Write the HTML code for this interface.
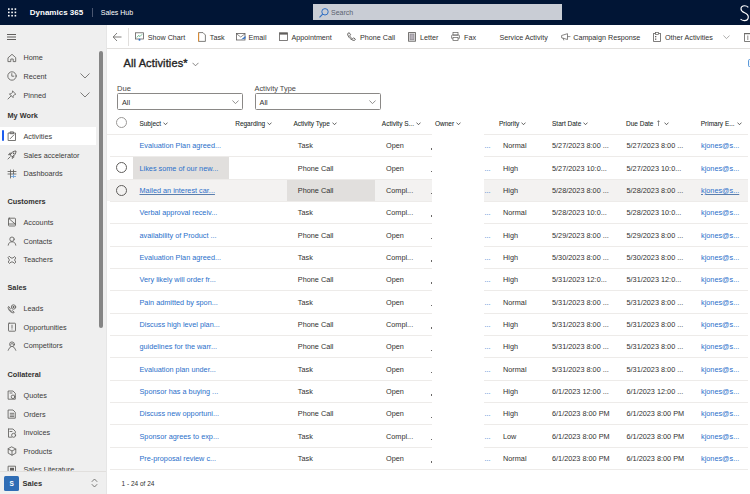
<!DOCTYPE html><html><head><meta charset="utf-8"><style>
*{margin:0;padding:0;box-sizing:border-box}
html,body{width:750px;height:494px;overflow:hidden;background:#fff;font-family:"Liberation Sans",sans-serif;color:#323130}
.a{position:absolute;white-space:nowrap}
#hdr{position:absolute;left:0;top:0;width:750px;height:25px;background:#011535}
#side{position:absolute;left:0;top:25px;width:105.5px;height:469px;background:#efefef}
.nv{position:absolute;left:23.5px;font-size:7.25px;color:#3b3a39;line-height:10px}
.grp{position:absolute;left:7.5px;font-size:7.3px;font-weight:bold;color:#323130;line-height:10px}
.ic{position:absolute;left:7px;width:10px;height:10px}
.tb{position:absolute;top:32.6px;font-size:7.2px;color:#323130;line-height:10px}
.gh{position:absolute;top:118.8px;font-size:6.5px;color:#201f1e;line-height:10px;-webkit-text-stroke:0.06px #201f1e}
.gc{position:absolute;font-size:7.3px;line-height:10px;color:#323130}
.lk{color:#2a6fca}
.rl{position:absolute;left:110px;width:637.7px;height:1px;background:#edebe9}
</style></head><body>
<div id="hdr">
<svg class="a" style="left:0;top:0" width="30" height="25"><rect x="8.0" y="8.3" width="1.6" height="1.6" fill="#fff"/><rect x="11.3" y="8.3" width="1.6" height="1.6" fill="#fff"/><rect x="14.6" y="8.3" width="1.6" height="1.6" fill="#fff"/><rect x="8.0" y="11.6" width="1.6" height="1.6" fill="#fff"/><rect x="11.3" y="11.6" width="1.6" height="1.6" fill="#fff"/><rect x="14.6" y="11.6" width="1.6" height="1.6" fill="#fff"/><rect x="8.0" y="14.9" width="1.6" height="1.6" fill="#fff"/><rect x="11.3" y="14.9" width="1.6" height="1.6" fill="#fff"/><rect x="14.6" y="14.9" width="1.6" height="1.6" fill="#fff"/></svg>
<div class="a" style="left:29.8px;top:8px;font-size:8px;font-weight:bold;color:#fff;line-height:10px">Dynamics 365</div>
<div class="a" style="left:92px;top:8px;width:1px;height:9px;background:#4a5670"></div>
<div class="a" style="left:100.8px;top:7.8px;font-size:7px;color:#fff;line-height:10px">Sales Hub</div>
<div class="a" style="left:313px;top:4.2px;width:248.5px;height:16.2px;background:#c9cdd5"></div>
<svg class="a" style="left:318px;top:7px" width="12" height="12" viewBox="0 0 12 12"><circle cx="7" cy="4.8" r="3.2" fill="none" stroke="#2f6fc4" stroke-width="1"/><line x1="4.7" y1="7.1" x2="1.5" y2="10.3" stroke="#2f6fc4" stroke-width="1.1"/></svg>
<div class="a" style="left:331px;top:8px;font-size:7px;color:#5a6270;line-height:10px">Search</div>
<svg class="a" style="left:739.5px;top:4.5px" width="10" height="17" viewBox="0 0 10 17"><path d="M8.3,2.4 C7.4,1.3 6.1,0.7 4.6,0.7 C2.4,0.7 1,2 1,3.9 C1,5.9 2.6,6.8 4.6,7.7 C6.7,8.6 8.3,9.7 8.3,12 C8.3,14.1 6.6,15.6 4.3,15.6 C2.7,15.6 1.3,15 0.5,14" fill="none" stroke="#fff" stroke-width="1.15"/></svg>
</div>
<div id="side"></div>
<div class="a" style="left:7px;top:34px;width:9px;height:1px;background:#605e5c;box-shadow:0 2.5px 0 #605e5c,0 5px 0 #605e5c"></div>
<div class="a" style="left:0;top:126.7px;width:96.2px;height:18.4px;background:#fff"></div>
<div class="a" style="left:1.8px;top:130.3px;width:2.4px;height:11px;background:#1a5cf0;border-radius:1px"></div>
<div class="nv" style="top:53.4px">Home</div><svg class="a" style="left:7px;top:52.9px" width="10" height="10" viewBox="0 0 10 10"><path d="M1.3,4.6 L5,1.3 L8.7,4.6 V8.6 H6.2 V6 H3.8 V8.6 H1.3 Z" stroke="#605e5c" stroke-width="0.85" fill="none" stroke-linejoin="round" stroke-linecap="round"/></svg>
<div class="nv" style="top:71.8px">Recent</div><svg class="a" style="left:7px;top:71.3px" width="10" height="10" viewBox="0 0 10 10"><circle cx="5" cy="5" r="4.2" stroke="#605e5c" stroke-width="0.85" fill="none" stroke-linejoin="round" stroke-linecap="round"/><polyline points="4.8,2.6 4.8,5.2 6.8,5.2" stroke="#605e5c" stroke-width="0.85" fill="none" stroke-linejoin="round" stroke-linecap="round"/></svg><svg class="a" style="left:80px;top:73.2px" width="10" height="6" viewBox="0 0 10 6"><polyline points="0.5,0.5 5,5 9.5,0.5" fill="none" stroke="#605e5c" stroke-width="0.8"/></svg>
<div class="nv" style="top:90.5px">Pinned</div><svg class="a" style="left:7px;top:90.0px" width="10" height="10" viewBox="0 0 10 10"><path d="M5.8,1.2 L8.8,4.2 L7.6,4.6 L6.1,6.1 L6.1,7.6 L2.4,3.9 L3.9,3.9 L5.4,2.4 Z" stroke="#605e5c" stroke-width="0.85" fill="none" stroke-linejoin="round" stroke-linecap="round"/><line x1="4" y1="6" x2="1" y2="9" stroke="#605e5c" stroke-width="0.85" fill="none" stroke-linejoin="round" stroke-linecap="round"/></svg><svg class="a" style="left:80px;top:91.9px" width="10" height="6" viewBox="0 0 10 6"><polyline points="0.5,0.5 5,5 9.5,0.5" fill="none" stroke="#605e5c" stroke-width="0.8"/></svg>
<div class="grp" style="top:110.8px">My Work</div>
<div class="nv" style="top:131.9px">Activities</div><svg class="a" style="left:7px;top:131.4px" width="10" height="10" viewBox="0 0 10 10"><rect x="1.5" y="2" width="7" height="7.5" stroke="#605e5c" stroke-width="0.85" fill="none" stroke-linejoin="round" stroke-linecap="round"/><rect x="3.5" y="0.9" width="3" height="1.8" stroke="#605e5c" stroke-width="0.85" fill="none" stroke-linejoin="round" stroke-linecap="round"/><line x1="3.3" y1="7.6" x2="7" y2="3.8" stroke="#605e5c" stroke-width="0.85" fill="none" stroke-linejoin="round" stroke-linecap="round"/></svg>
<div class="nv" style="top:150.6px">Sales accelerator</div><svg class="a" style="left:7px;top:150.1px" width="10" height="10" viewBox="0 0 10 10"><path d="M9,1 C6.5,1 4.5,2.5 3.2,4.8 L5.2,6.8 C7.5,5.5 9,3.5 9,1 Z" stroke="#605e5c" stroke-width="1" fill="none"/><circle cx="6.6" cy="3.4" r="0.8" fill="#605e5c"/><path d="M3.5,4.5 L1.5,4.8 L2.7,3.2 L4.5,3.2 M5.5,6.5 L5.2,8.5 L6.8,7.3 L6.8,5.5" stroke="#605e5c" stroke-width="0.85" fill="none" stroke-linejoin="round" stroke-linecap="round"/><line x1="3.2" y1="6.8" x2="1" y2="9" stroke="#605e5c" stroke-width="0.85" fill="none" stroke-linejoin="round" stroke-linecap="round"/></svg>
<div class="nv" style="top:169.0px">Dashboards</div><svg class="a" style="left:7px;top:168.5px" width="10" height="10" viewBox="0 0 10 10"><line x1="3.5" y1="1" x2="3.5" y2="9" stroke="#605e5c" stroke-width="0.85" fill="none" stroke-linejoin="round" stroke-linecap="round"/><line x1="6.5" y1="1" x2="6.5" y2="5" stroke="#605e5c" stroke-width="0.85" fill="none" stroke-linejoin="round" stroke-linecap="round"/><line x1="1" y1="2.5" x2="9" y2="2.5" stroke="#605e5c" stroke-width="0.85" fill="none" stroke-linejoin="round" stroke-linecap="round"/><line x1="1" y1="5" x2="9" y2="5" stroke="#605e5c" stroke-width="0.85" fill="none" stroke-linejoin="round" stroke-linecap="round"/><line x1="4" y1="7.5" x2="9" y2="7.5" stroke="#6a9fd8" stroke-width="0.85"/><line x1="6.5" y1="5" x2="6.5" y2="9" stroke="#6a9fd8" stroke-width="0.85"/></svg>
<div class="grp" style="top:197.0px">Customers</div>
<div class="nv" style="top:217.7px">Accounts</div><svg class="a" style="left:7px;top:217.2px" width="10" height="10" viewBox="0 0 10 10"><rect x="1.5" y="1.2" width="7" height="7.8" rx="0.8" stroke="#605e5c" stroke-width="0.85" fill="none" stroke-linejoin="round" stroke-linecap="round"/><line x1="1.8" y1="1.5" x2="8.2" y2="7" stroke="#605e5c" stroke-width="0.85" fill="none" stroke-linejoin="round" stroke-linecap="round"/><line x1="1.5" y1="7" x2="8.5" y2="7" stroke="#605e5c" stroke-width="0.85" fill="none" stroke-linejoin="round" stroke-linecap="round"/></svg>
<div class="nv" style="top:236.6px">Contacts</div><svg class="a" style="left:7px;top:236.1px" width="10" height="10" viewBox="0 0 10 10"><circle cx="5" cy="3.2" r="2.2" stroke="#605e5c" stroke-width="0.85" fill="none" stroke-linejoin="round" stroke-linecap="round"/><path d="M1.2,9.2 C1.5,6.8 3,5.8 5,5.8 C7,5.8 8.5,6.8 8.8,9.2" stroke="#605e5c" stroke-width="0.85" fill="none" stroke-linejoin="round" stroke-linecap="round"/></svg>
<div class="nv" style="top:255.2px">Teachers</div><svg class="a" style="left:7px;top:254.7px" width="10" height="10" viewBox="0 0 10 10"><path d="M2.5,1.5 L4,3 L6,3 L7.5,1.5 L8.8,3 L7.5,5 L8.8,7 L7.5,8.5 L6,7 L4,7 L2.5,8.5 L1.2,7 L2.5,5 L1.2,3 Z" stroke="#605e5c" stroke-width="0.85" fill="none" stroke-linejoin="round" stroke-linecap="round"/></svg>
<div class="grp" style="top:283.3px">Sales</div>
<div class="nv" style="top:304.0px">Leads</div><svg class="a" style="left:7px;top:303.5px" width="10" height="10" viewBox="0 0 10 10"><path d="M2,2.8 L3.2,4.5 L2.6,5.2 C3,6.2 3.8,7 4.8,7.4 L5.5,6.8 L7.2,8 L6.5,9 C3.8,8.8 1.2,6.2 1,3.5 Z" stroke="#605e5c" stroke-width="0.85" fill="none" stroke-linejoin="round" stroke-linecap="round"/><circle cx="6.5" cy="3" r="2.2" stroke="#605e5c" stroke-width="0.85" fill="none" stroke-linejoin="round" stroke-linecap="round"/><rect x="5.6" y="2.1" width="1.8" height="1.8" transform="rotate(45 6.5 3)" fill="#605e5c"/></svg>
<div class="nv" style="top:322.6px">Opportunities</div><svg class="a" style="left:7px;top:322.1px" width="10" height="10" viewBox="0 0 10 10"><rect x="1.5" y="1.2" width="7" height="8" rx="0.6" stroke="#605e5c" stroke-width="0.85" fill="none" stroke-linejoin="round" stroke-linecap="round"/><line x1="5" y1="3.2" x2="5" y2="5.6" stroke="#605e5c" stroke-width="0.85" fill="none" stroke-linejoin="round" stroke-linecap="round"/><line x1="5" y1="6.8" x2="5" y2="7.1" stroke="#605e5c" stroke-width="0.85" fill="none" stroke-linejoin="round" stroke-linecap="round"/></svg>
<div class="nv" style="top:341.1px">Competitors</div><svg class="a" style="left:7px;top:340.6px" width="10" height="10" viewBox="0 0 10 10"><circle cx="5" cy="3.3" r="2.4" stroke="#605e5c" stroke-width="0.85" fill="none" stroke-linejoin="round" stroke-linecap="round"/><path d="M3.6,3.6 L5,2.4 L6.4,3.6" stroke="#605e5c" stroke-width="0.85" fill="none" stroke-linejoin="round" stroke-linecap="round"/><path d="M1.2,9.3 C2,7.4 3,6.2 4,5.6 M8.8,9.3 C8,7.4 7,6.2 6,5.6" stroke="#605e5c" stroke-width="0.85" fill="none" stroke-linejoin="round" stroke-linecap="round"/></svg>
<div class="grp" style="top:369.7px">Collateral</div>
<div class="nv" style="top:390.6px">Quotes</div><svg class="a" style="left:7px;top:390.1px" width="10" height="10" viewBox="0 0 10 10"><path d="M1.5,1 H6 L8.3,3.3 V9.2 H1.5 Z" stroke="#605e5c" stroke-width="0.85" fill="none" stroke-linejoin="round" stroke-linecap="round"/><circle cx="6" cy="6.8" r="1.8" stroke="#605e5c" stroke-width="0.85" fill="none" stroke-linejoin="round" stroke-linecap="round"/><line x1="3" y1="3" x2="5" y2="3" stroke="#605e5c" stroke-width="0.85" fill="none" stroke-linejoin="round" stroke-linecap="round"/></svg>
<div class="nv" style="top:409.5px">Orders</div><svg class="a" style="left:7px;top:409.0px" width="10" height="10" viewBox="0 0 10 10"><path d="M1.5,1 H6 L8.3,3.3 V9.2 H1.5 Z" stroke="#605e5c" stroke-width="0.85" fill="none" stroke-linejoin="round" stroke-linecap="round"/><line x1="3.2" y1="4.3" x2="6.8" y2="4.3" stroke="#605e5c" stroke-width="0.85" fill="none" stroke-linejoin="round" stroke-linecap="round"/><line x1="3.2" y1="6" x2="6.8" y2="6" stroke="#605e5c" stroke-width="0.85" fill="none" stroke-linejoin="round" stroke-linecap="round"/><line x1="3.2" y1="7.6" x2="6.8" y2="7.6" stroke="#605e5c" stroke-width="0.85" fill="none" stroke-linejoin="round" stroke-linecap="round"/></svg>
<div class="nv" style="top:428.1px">Invoices</div><svg class="a" style="left:7px;top:427.6px" width="10" height="10" viewBox="0 0 10 10"><path d="M1.5,1 H6 L8.3,3.3 V5 M4.5,9.2 H1.5 V1" stroke="#605e5c" stroke-width="0.85" fill="none" stroke-linejoin="round" stroke-linecap="round"/><circle cx="6.6" cy="7.3" r="2" stroke="#605e5c" stroke-width="0.85" fill="none" stroke-linejoin="round" stroke-linecap="round"/><line x1="3" y1="3.5" x2="5" y2="3.5" stroke="#605e5c" stroke-width="0.85" fill="none" stroke-linejoin="round" stroke-linecap="round"/></svg>
<div class="nv" style="top:446.6px">Products</div><svg class="a" style="left:7px;top:446.1px" width="10" height="10" viewBox="0 0 10 10"><path d="M5,1 L8.8,3 V7.2 L5,9.2 L1.2,7.2 V3 Z M1.2,3 L5,5 L8.8,3 M5,5 V9.2" stroke="#605e5c" stroke-width="0.85" fill="none" stroke-linejoin="round" stroke-linecap="round"/></svg>
<div class="nv" style="top:465.2px">Sales Literature</div><svg class="a" style="left:7px;top:464.7px" width="10" height="10" viewBox="0 0 10 10"><rect x="1.5" y="1.2" width="7" height="8" stroke="#605e5c" stroke-width="0.85" fill="none" stroke-linejoin="round" stroke-linecap="round"/><rect x="3" y="2.8" width="4" height="2.8" fill="#605e5c"/><line x1="3" y1="7.2" x2="7" y2="7.2" stroke="#605e5c" stroke-width="0.85" fill="none" stroke-linejoin="round" stroke-linecap="round"/></svg>
<div class="a" style="left:99px;top:51px;width:4.2px;height:276.6px;background:#858585;border-radius:2.1px"></div>
<div class="a" style="left:0;top:471px;width:105.5px;height:23px;background:#efefef;border-top:1px solid #e1dfdd"></div>
<div class="a" style="left:4.2px;top:476px;width:15px;height:15px;background:#2f6db5;border-radius:1.5px;color:#fff;font-size:6.5px;font-weight:bold;text-align:center;line-height:15px">S</div>
<div class="a" style="left:22.5px;top:478.7px;font-size:7.5px;font-weight:bold;line-height:10px">Sales</div>
<svg class="a" style="left:91px;top:478.3px" width="7" height="10" viewBox="0 0 7 10"><polyline points="0.8,3.8 3.5,1 6.2,3.8" fill="none" stroke="#605e5c" stroke-width="0.8"/><polyline points="0.8,6.2 3.5,9 6.2,6.2" fill="none" stroke="#605e5c" stroke-width="0.8"/></svg>
<div class="a" style="left:105.5px;top:25px;width:1.5px;height:469px;background:#e6e6e6"></div>
<div class="a" style="left:107px;top:48px;width:643px;height:1px;background:#e1dfdd"></div>
<svg class="a" style="left:112px;top:32px" width="11" height="10" viewBox="0 0 11 10"><polyline points="5,1 1.2,5 5,9" fill="none" stroke="#605e5c" stroke-width="0.8"/><line x1="1.2" y1="5" x2="9.5" y2="5" stroke="#605e5c" stroke-width="0.8"/></svg>
<div class="a" style="left:128px;top:28px;width:1px;height:18px;background:#e1dfdd"></div>
<div class="tb" style="left:147.7px">Show Chart</div>
<div class="tb" style="left:209.8px">Task</div>
<div class="tb" style="left:248.5px">Email</div>
<div class="tb" style="left:291.5px">Appointment</div>
<div class="tb" style="left:360px">Phone Call</div>
<div class="tb" style="left:420px">Letter</div>
<div class="tb" style="left:464px">Fax</div>
<div class="tb" style="left:499.4px">Service Activity</div>
<div class="tb" style="left:573.2px">Campaign Response</div>
<div class="tb" style="left:665px">Other Activities</div>
<svg class="a" style="left:135px;top:32px" width="9" height="9" viewBox="0 0 9 9"><rect x="0.5" y="0.8" width="8" height="6.2" fill="none" stroke="#605e5c" stroke-width="0.8"/><polyline points="1.8,5.5 3.5,3.5 5,4.5 7.2,2.2" fill="none" stroke="#3aa36a" stroke-width="0.7"/><circle cx="4.5" cy="7.8" r="1" fill="#2f6fc4"/></svg>
<svg class="a" style="left:198px;top:32px" width="8" height="10" viewBox="0 0 8 10"><path d="M0.6,0.6 H5 L7.4,3 V9.4 H0.6 Z" fill="none" stroke="#605e5c" stroke-width="0.8"/><line x1="0.6" y1="0.6" x2="0.6" y2="9.4" stroke="#e08a2c" stroke-width="1"/></svg>
<svg class="a" style="left:235.5px;top:33px" width="10" height="8" viewBox="0 0 10 8"><rect x="0.5" y="0.5" width="8.5" height="6.5" fill="none" stroke="#605e5c" stroke-width="0.8"/><polyline points="0.5,0.8 4.7,4 9,0.8" fill="none" stroke="#605e5c" stroke-width="0.7"/><path d="M5,6.5 L9.5,3 L9.5,5.5 Z" fill="#2f6fc4"/></svg>
<svg class="a" style="left:279px;top:32px" width="9" height="9" viewBox="0 0 9 9"><rect x="0.5" y="0.8" width="8" height="7.7" fill="none" stroke="#605e5c" stroke-width="0.8"/><rect x="0.5" y="0.8" width="8" height="1.8" fill="#605e5c"/></svg>
<svg class="a" style="left:346.5px;top:32px" width="9" height="9" viewBox="0 0 9 9"><path d="M2.2,0.7 L3.6,2.8 L2.7,3.8 C3.3,5.3 4.2,6.2 5.5,6.8 L6.5,5.8 L8.4,7.2 L7.4,8.5 C4,8.2 0.8,5 0.6,1.7 Z" fill="none" stroke="#605e5c" stroke-width="0.95"/></svg>
<svg class="a" style="left:407.5px;top:32px" width="8" height="10" viewBox="0 0 8 10"><rect x="0.6" y="0.6" width="6.8" height="8.6" fill="none" stroke="#605e5c" stroke-width="0.9"/><rect x="1.6" y="1.6" width="4.8" height="6.6" fill="#8e8a90"/><rect x="2.4" y="2.4" width="3.2" height="5" fill="#b5b0b8"/></svg>
<svg class="a" style="left:451px;top:32px" width="9" height="9" viewBox="0 0 9 9"><rect x="2" y="0.6" width="5" height="2.5" fill="none" stroke="#605e5c" stroke-width="0.7"/><rect x="0.6" y="3" width="7.8" height="3.8" rx="0.8" fill="none" stroke="#605e5c" stroke-width="0.75"/><rect x="2" y="5.5" width="5" height="3" fill="#fff" stroke="#605e5c" stroke-width="0.7"/></svg>
<svg class="a" style="left:561px;top:33px" width="10" height="8" viewBox="0 0 10 8"><path d="M0.6,2.5 L6.5,0.7 L6.5,6.5 L0.6,4.8 Z" fill="none" stroke="#605e5c" stroke-width="0.75"/><line x1="6.5" y1="3.6" x2="9.4" y2="3.6" stroke="#605e5c" stroke-width="0.7"/><path d="M2,4.8 L2.8,7.4" stroke="#605e5c" stroke-width="0.7"/></svg>
<svg class="a" style="left:653px;top:32px" width="8" height="10" viewBox="0 0 8 10"><rect x="0.6" y="1.5" width="6.8" height="8" fill="none" stroke="#605e5c" stroke-width="0.8"/><rect x="2.5" y="0.5" width="3" height="2" fill="#fff" stroke="#605e5c" stroke-width="0.7"/><rect x="2" y="4" width="1.3" height="1.3" fill="#605e5c"/><rect x="2" y="6.5" width="1.3" height="1.3" fill="#605e5c"/></svg>
<svg class="a" style="left:722.8px;top:35px" width="7" height="4.5" viewBox="0 0 7 4.5"><polyline points="0.4,0.5 3.5,3.6 6.6,0.5" fill="none" stroke="#8a8886" stroke-width="0.7"/></svg>
<svg class="a" style="left:743.5px;top:32px" width="8" height="10" viewBox="0 0 8 10"><rect x="0.6" y="1.8" width="6.5" height="7.6" fill="none" stroke="#605e5c" stroke-width="0.8"/><line x1="0" y1="1.5" x2="8" y2="1.5" stroke="#605e5c" stroke-width="0.8"/><line x1="3.8" y1="3.5" x2="3.8" y2="8" stroke="#605e5c" stroke-width="0.7"/></svg>
<div class="a" style="left:123.5px;top:57.3px;font-size:11px;line-height:13px;color:#242424;letter-spacing:0.12px;-webkit-text-stroke:0.35px #242424">All Activities*</div>
<svg class="a" style="left:191.5px;top:61.6px" width="7" height="5" viewBox="0 0 7 5"><polyline points="0.5,0.8 3.5,3.8 6.5,0.8" fill="none" stroke="#605e5c" stroke-width="0.75"/></svg>
<svg class="a" style="left:747.5px;top:59px" width="5" height="8" viewBox="0 0 5 8"><rect x="0.6" y="0.6" width="6" height="7" rx="0.8" fill="none" stroke="#4a8fd6" stroke-width="1"/></svg>
<div class="a" style="left:117px;top:83.8px;font-size:7.6px;line-height:10px;color:#484644">Due</div>
<div class="a" style="left:117px;top:93.4px;width:126px;height:16.8px;border:1px solid #8a8886;border-radius:1.5px"></div>
<div class="a" style="left:122px;top:97.7px;font-size:7.3px;line-height:10px;color:#323130">All</div>
<svg class="a" style="left:231.6px;top:99.8px" width="7" height="4.5" viewBox="0 0 7 4.5"><polyline points="0.4,0.5 3.5,3.6 6.6,0.5" fill="none" stroke="#605e5c" stroke-width="0.7"/></svg>
<div class="a" style="left:254.5px;top:83.8px;font-size:7.4px;line-height:10px;color:#484644">Activity Type</div>
<div class="a" style="left:254.6px;top:93.4px;width:126px;height:16.8px;border:1px solid #8a8886;border-radius:1.5px"></div>
<div class="a" style="left:259.6px;top:97.7px;font-size:7.3px;line-height:10px;color:#323130">All</div>
<svg class="a" style="left:369.1px;top:99.8px" width="7" height="4.5" viewBox="0 0 7 4.5"><polyline points="0.4,0.5 3.5,3.6 6.6,0.5" fill="none" stroke="#605e5c" stroke-width="0.7"/></svg>
<div class="a" style="left:115.8px;top:117.2px;width:11px;height:11px;border:1px solid #9a9896;border-radius:50%"></div>
<div class="gh" style="left:139.4px">Subject<svg style="margin-left:2.2px;vertical-align:0.4px" width="5" height="3.4" viewBox="0 0 5 3.4"><polyline points="0.5,0.6 2.5,2.7 4.5,0.6" fill="none" stroke="#323130" stroke-width="0.75"/></svg></div>
<div class="gh" style="left:235.2px">Regarding<svg style="margin-left:2.2px;vertical-align:0.4px" width="5" height="3.4" viewBox="0 0 5 3.4"><polyline points="0.5,0.6 2.5,2.7 4.5,0.6" fill="none" stroke="#323130" stroke-width="0.75"/></svg></div>
<div class="gh" style="left:293.4px">Activity Type<svg style="margin-left:2.2px;vertical-align:0.4px" width="5" height="3.4" viewBox="0 0 5 3.4"><polyline points="0.5,0.6 2.5,2.7 4.5,0.6" fill="none" stroke="#323130" stroke-width="0.75"/></svg></div>
<div class="gh" style="left:381.8px">Activity S...<svg style="margin-left:2.2px;vertical-align:0.4px" width="5" height="3.4" viewBox="0 0 5 3.4"><polyline points="0.5,0.6 2.5,2.7 4.5,0.6" fill="none" stroke="#323130" stroke-width="0.75"/></svg></div>
<div class="gh" style="left:435px">Owner<svg style="margin-left:2.2px;vertical-align:0.4px" width="5" height="3.4" viewBox="0 0 5 3.4"><polyline points="0.5,0.6 2.5,2.7 4.5,0.6" fill="none" stroke="#323130" stroke-width="0.75"/></svg></div>
<div class="gh" style="left:499px">Priority<svg style="margin-left:2.2px;vertical-align:0.4px" width="5" height="3.4" viewBox="0 0 5 3.4"><polyline points="0.5,0.6 2.5,2.7 4.5,0.6" fill="none" stroke="#323130" stroke-width="0.75"/></svg></div>
<div class="gh" style="left:552px">Start Date<svg style="margin-left:2.2px;vertical-align:0.4px" width="5" height="3.4" viewBox="0 0 5 3.4"><polyline points="0.5,0.6 2.5,2.7 4.5,0.6" fill="none" stroke="#323130" stroke-width="0.75"/></svg></div>
<div class="gh" style="left:626px">Due Date<svg style="margin-left:3.8px;margin-right:1.2px;vertical-align:-0.3px" width="3" height="6.5" viewBox="0 0 3 6.5"><line x1="1.5" y1="0.8" x2="1.5" y2="6.5" stroke="#323130" stroke-width="0.55"/><polyline points="0.4,1.9 1.5,0.7 2.6,1.9" fill="none" stroke="#323130" stroke-width="0.55"/></svg><svg style="margin-left:2.2px;vertical-align:0.4px" width="5" height="3.4" viewBox="0 0 5 3.4"><polyline points="0.5,0.6 2.5,2.7 4.5,0.6" fill="none" stroke="#323130" stroke-width="0.75"/></svg></div>
<div class="gh" style="left:700.7px">Primary E...<svg style="margin-left:2.2px;vertical-align:0.4px" width="5" height="3.4" viewBox="0 0 5 3.4"><polyline points="0.5,0.6 2.5,2.7 4.5,0.6" fill="none" stroke="#323130" stroke-width="0.75"/></svg></div>
<div class="rl" style="left:107px;width:640.7px;top:133.80px"></div>
<div class="gc lk" style="left:139.5px;top:141.18px">Evaluation Plan agreed...</div>
<div class="gc" style="left:297.8px;top:141.18px">Task</div>
<div class="gc" style="left:386px;top:141.18px">Open</div>
<div class="gc" style="left:503px;top:141.18px">Normal</div>
<div class="gc" style="left:552px;top:141.18px">5/27/2023 8:00 ...</div>
<div class="gc" style="left:626.5px;top:141.18px">5/27/2023 8:00 ...</div>
<div class="gc lk" style="left:701px;top:141.18px">kjones@s...</div>
<div class="a" style="left:431px;top:148.38px;width:1px;height:1.4px;background:#6a6867"></div>
<div class="gc lk" style="left:484.5px;top:141.18px">...</div>
<div class="rl" style="top:156.15px"></div>
<div class="a" style="left:133px;top:157.15px;width:95.6px;height:21.85px;background:#e1dfdd"></div>
<div class="a" style="left:115.8px;top:162.3px;width:11px;height:11px;border:1.1px solid #605e5c;border-radius:50%"></div>
<div class="gc lk" style="left:139.5px;top:163.53px">Likes some of our new...</div>
<div class="gc" style="left:297.8px;top:163.53px">Phone Call</div>
<div class="gc" style="left:386px;top:163.53px">Open</div>
<div class="gc" style="left:503px;top:163.53px">High</div>
<div class="gc" style="left:552px;top:163.53px">5/27/2023 10:0...</div>
<div class="gc" style="left:626.5px;top:163.53px">5/27/2023 10:0...</div>
<div class="gc lk" style="left:701px;top:163.53px">kjones@s...</div>
<div class="a" style="left:431px;top:170.73px;width:1px;height:1.4px;background:#6a6867"></div>
<div class="gc lk" style="left:484.5px;top:163.53px">...</div>
<div class="rl" style="top:178.50px"></div>
<div class="a" style="left:107px;top:179.50px;width:640.7px;height:21.85px;background:#f3f2f1"></div>
<div class="a" style="left:287.3px;top:179.50px;width:88px;height:21.85px;background:#e1dfdd"></div>
<div class="a" style="left:115.8px;top:184.7px;width:11px;height:11px;border:1.1px solid #605e5c;border-radius:50%"></div>
<div class="gc lk" style="left:139.5px;top:185.88px;text-decoration:underline;text-decoration-thickness:0.6px;text-decoration-color:#5b7fae;text-underline-offset:1px">Mailed an interest car...</div>
<div class="gc" style="left:297.8px;top:185.88px">Phone Call</div>
<div class="gc" style="left:386px;top:185.88px">Compl...</div>
<div class="gc" style="left:503px;top:185.88px">High</div>
<div class="gc" style="left:552px;top:185.88px">5/28/2023 8:00 ...</div>
<div class="gc" style="left:626.5px;top:185.88px">5/28/2023 8:00 ...</div>
<div class="gc lk" style="left:701px;top:185.88px;text-decoration:underline;text-decoration-thickness:0.6px;text-decoration-color:#5b7fae;text-underline-offset:1px">kjones@s...</div>
<div class="a" style="left:431px;top:193.08px;width:1px;height:1.4px;background:#6a6867"></div>
<div class="gc lk" style="left:484.5px;top:185.88px">...</div>
<div class="rl" style="top:200.85px"></div>
<div class="gc lk" style="left:139.5px;top:208.23px">Verbal approval receiv...</div>
<div class="gc" style="left:297.8px;top:208.23px">Task</div>
<div class="gc" style="left:386px;top:208.23px">Compl...</div>
<div class="gc" style="left:503px;top:208.23px">Normal</div>
<div class="gc" style="left:552px;top:208.23px">5/28/2023 10:0...</div>
<div class="gc" style="left:626.5px;top:208.23px">5/28/2023 10:0...</div>
<div class="gc lk" style="left:701px;top:208.23px">kjones@s...</div>
<div class="a" style="left:431px;top:215.43px;width:1px;height:1.4px;background:#6a6867"></div>
<div class="gc lk" style="left:484.5px;top:208.23px">...</div>
<div class="rl" style="top:223.20px"></div>
<div class="gc lk" style="left:139.5px;top:230.58px">availability of Product ...</div>
<div class="gc" style="left:297.8px;top:230.58px">Phone Call</div>
<div class="gc" style="left:386px;top:230.58px">Open</div>
<div class="gc" style="left:503px;top:230.58px">High</div>
<div class="gc" style="left:552px;top:230.58px">5/29/2023 8:00 ...</div>
<div class="gc" style="left:626.5px;top:230.58px">5/29/2023 8:00 ...</div>
<div class="gc lk" style="left:701px;top:230.58px">kjones@s...</div>
<div class="a" style="left:431px;top:237.78px;width:1px;height:1.4px;background:#6a6867"></div>
<div class="gc lk" style="left:484.5px;top:230.58px">...</div>
<div class="rl" style="top:245.55px"></div>
<div class="gc lk" style="left:139.5px;top:252.93px">Evaluation Plan agreed...</div>
<div class="gc" style="left:297.8px;top:252.93px">Task</div>
<div class="gc" style="left:386px;top:252.93px">Compl...</div>
<div class="gc" style="left:503px;top:252.93px">High</div>
<div class="gc" style="left:552px;top:252.93px">5/30/2023 8:00 ...</div>
<div class="gc" style="left:626.5px;top:252.93px">5/30/2023 8:00 ...</div>
<div class="gc lk" style="left:701px;top:252.93px">kjones@s...</div>
<div class="a" style="left:431px;top:260.12px;width:1px;height:1.4px;background:#6a6867"></div>
<div class="gc lk" style="left:484.5px;top:252.93px">...</div>
<div class="rl" style="top:267.90px"></div>
<div class="gc lk" style="left:139.5px;top:275.28px">Very likely will order fr...</div>
<div class="gc" style="left:297.8px;top:275.28px">Phone Call</div>
<div class="gc" style="left:386px;top:275.28px">Open</div>
<div class="gc" style="left:503px;top:275.28px">High</div>
<div class="gc" style="left:552px;top:275.28px">5/31/2023 12:0...</div>
<div class="gc" style="left:626.5px;top:275.28px">5/31/2023 12:0...</div>
<div class="gc lk" style="left:701px;top:275.28px">kjones@s...</div>
<div class="a" style="left:431px;top:282.48px;width:1px;height:1.4px;background:#6a6867"></div>
<div class="gc lk" style="left:484.5px;top:275.28px">...</div>
<div class="rl" style="top:290.25px"></div>
<div class="gc lk" style="left:139.5px;top:297.62px">Pain admitted by spon...</div>
<div class="gc" style="left:297.8px;top:297.62px">Task</div>
<div class="gc" style="left:386px;top:297.62px">Open</div>
<div class="gc" style="left:503px;top:297.62px">Normal</div>
<div class="gc" style="left:552px;top:297.62px">5/31/2023 8:00 ...</div>
<div class="gc" style="left:626.5px;top:297.62px">5/31/2023 8:00 ...</div>
<div class="gc lk" style="left:701px;top:297.62px">kjones@s...</div>
<div class="a" style="left:431px;top:304.82px;width:1px;height:1.4px;background:#6a6867"></div>
<div class="gc lk" style="left:484.5px;top:297.62px">...</div>
<div class="rl" style="top:312.60px"></div>
<div class="gc lk" style="left:139.5px;top:319.98px">Discuss high level plan...</div>
<div class="gc" style="left:297.8px;top:319.98px">Phone Call</div>
<div class="gc" style="left:386px;top:319.98px">Compl...</div>
<div class="gc" style="left:503px;top:319.98px">High</div>
<div class="gc" style="left:552px;top:319.98px">5/31/2023 8:00 ...</div>
<div class="gc" style="left:626.5px;top:319.98px">5/31/2023 8:00 ...</div>
<div class="gc lk" style="left:701px;top:319.98px">kjones@s...</div>
<div class="a" style="left:431px;top:327.18px;width:1px;height:1.4px;background:#6a6867"></div>
<div class="gc lk" style="left:484.5px;top:319.98px">...</div>
<div class="rl" style="top:334.95px"></div>
<div class="gc lk" style="left:139.5px;top:342.33px">guidelines for the warr...</div>
<div class="gc" style="left:297.8px;top:342.33px">Phone Call</div>
<div class="gc" style="left:386px;top:342.33px">Open</div>
<div class="gc" style="left:503px;top:342.33px">High</div>
<div class="gc" style="left:552px;top:342.33px">5/31/2023 8:00 ...</div>
<div class="gc" style="left:626.5px;top:342.33px">5/31/2023 8:00 ...</div>
<div class="gc lk" style="left:701px;top:342.33px">kjones@s...</div>
<div class="a" style="left:431px;top:349.53px;width:1px;height:1.4px;background:#6a6867"></div>
<div class="gc lk" style="left:484.5px;top:342.33px">...</div>
<div class="rl" style="top:357.30px"></div>
<div class="gc lk" style="left:139.5px;top:364.68px">Evaluation plan under...</div>
<div class="gc" style="left:297.8px;top:364.68px">Task</div>
<div class="gc" style="left:386px;top:364.68px">Open</div>
<div class="gc" style="left:503px;top:364.68px">Normal</div>
<div class="gc" style="left:552px;top:364.68px">5/31/2023 8:00 ...</div>
<div class="gc" style="left:626.5px;top:364.68px">5/31/2023 8:00 ...</div>
<div class="gc lk" style="left:701px;top:364.68px">kjones@s...</div>
<div class="a" style="left:431px;top:371.88px;width:1px;height:1.4px;background:#6a6867"></div>
<div class="gc lk" style="left:484.5px;top:364.68px">...</div>
<div class="rl" style="top:379.65px"></div>
<div class="gc lk" style="left:139.5px;top:387.03px">Sponsor has a buying ...</div>
<div class="gc" style="left:297.8px;top:387.03px">Task</div>
<div class="gc" style="left:386px;top:387.03px">Open</div>
<div class="gc" style="left:503px;top:387.03px">High</div>
<div class="gc" style="left:552px;top:387.03px">6/1/2023 12:00 ...</div>
<div class="gc" style="left:626.5px;top:387.03px">6/1/2023 12:00 ...</div>
<div class="gc lk" style="left:701px;top:387.03px">kjones@s...</div>
<div class="a" style="left:431px;top:394.23px;width:1px;height:1.4px;background:#6a6867"></div>
<div class="gc lk" style="left:484.5px;top:387.03px">...</div>
<div class="rl" style="top:402.00px"></div>
<div class="gc lk" style="left:139.5px;top:409.38px">Discuss new opportuni...</div>
<div class="gc" style="left:297.8px;top:409.38px">Phone Call</div>
<div class="gc" style="left:386px;top:409.38px">Open</div>
<div class="gc" style="left:503px;top:409.38px">High</div>
<div class="gc" style="left:552px;top:409.38px">6/1/2023 8:00 PM</div>
<div class="gc" style="left:626.5px;top:409.38px">6/1/2023 8:00 PM</div>
<div class="gc lk" style="left:701px;top:409.38px">kjones@s...</div>
<div class="a" style="left:431px;top:416.58px;width:1px;height:1.4px;background:#6a6867"></div>
<div class="gc lk" style="left:484.5px;top:409.38px">...</div>
<div class="rl" style="top:424.35px"></div>
<div class="gc lk" style="left:139.5px;top:431.73px">Sponsor agrees to exp...</div>
<div class="gc" style="left:297.8px;top:431.73px">Task</div>
<div class="gc" style="left:386px;top:431.73px">Compl...</div>
<div class="gc" style="left:503px;top:431.73px">Low</div>
<div class="gc" style="left:552px;top:431.73px">6/1/2023 8:00 PM</div>
<div class="gc" style="left:626.5px;top:431.73px">6/1/2023 8:00 PM</div>
<div class="gc lk" style="left:701px;top:431.73px">kjones@s...</div>
<div class="a" style="left:431px;top:438.93px;width:1px;height:1.4px;background:#6a6867"></div>
<div class="gc lk" style="left:484.5px;top:431.73px">...</div>
<div class="rl" style="top:446.70px"></div>
<div class="gc lk" style="left:139.5px;top:454.08px">Pre-proposal review c...</div>
<div class="gc" style="left:297.8px;top:454.08px">Task</div>
<div class="gc" style="left:386px;top:454.08px">Open</div>
<div class="gc" style="left:503px;top:454.08px">Normal</div>
<div class="gc" style="left:552px;top:454.08px">6/1/2023 8:00 PM</div>
<div class="gc" style="left:626.5px;top:454.08px">6/1/2023 8:00 PM</div>
<div class="gc lk" style="left:701px;top:454.08px">kjones@s...</div>
<div class="a" style="left:431px;top:461.28px;width:1px;height:1.4px;background:#6a6867"></div>
<div class="gc lk" style="left:484.5px;top:454.08px">...</div>
<div class="rl" style="top:469.05px"></div>
<div class="a" style="left:432px;top:134.3px;width:52px;height:334.6px;background:#fff"></div>
<div class="a" style="left:121.5px;top:478.8px;font-size:6.5px;line-height:10px;color:#323130">1 - 24 of 24</div>
</body></html>
